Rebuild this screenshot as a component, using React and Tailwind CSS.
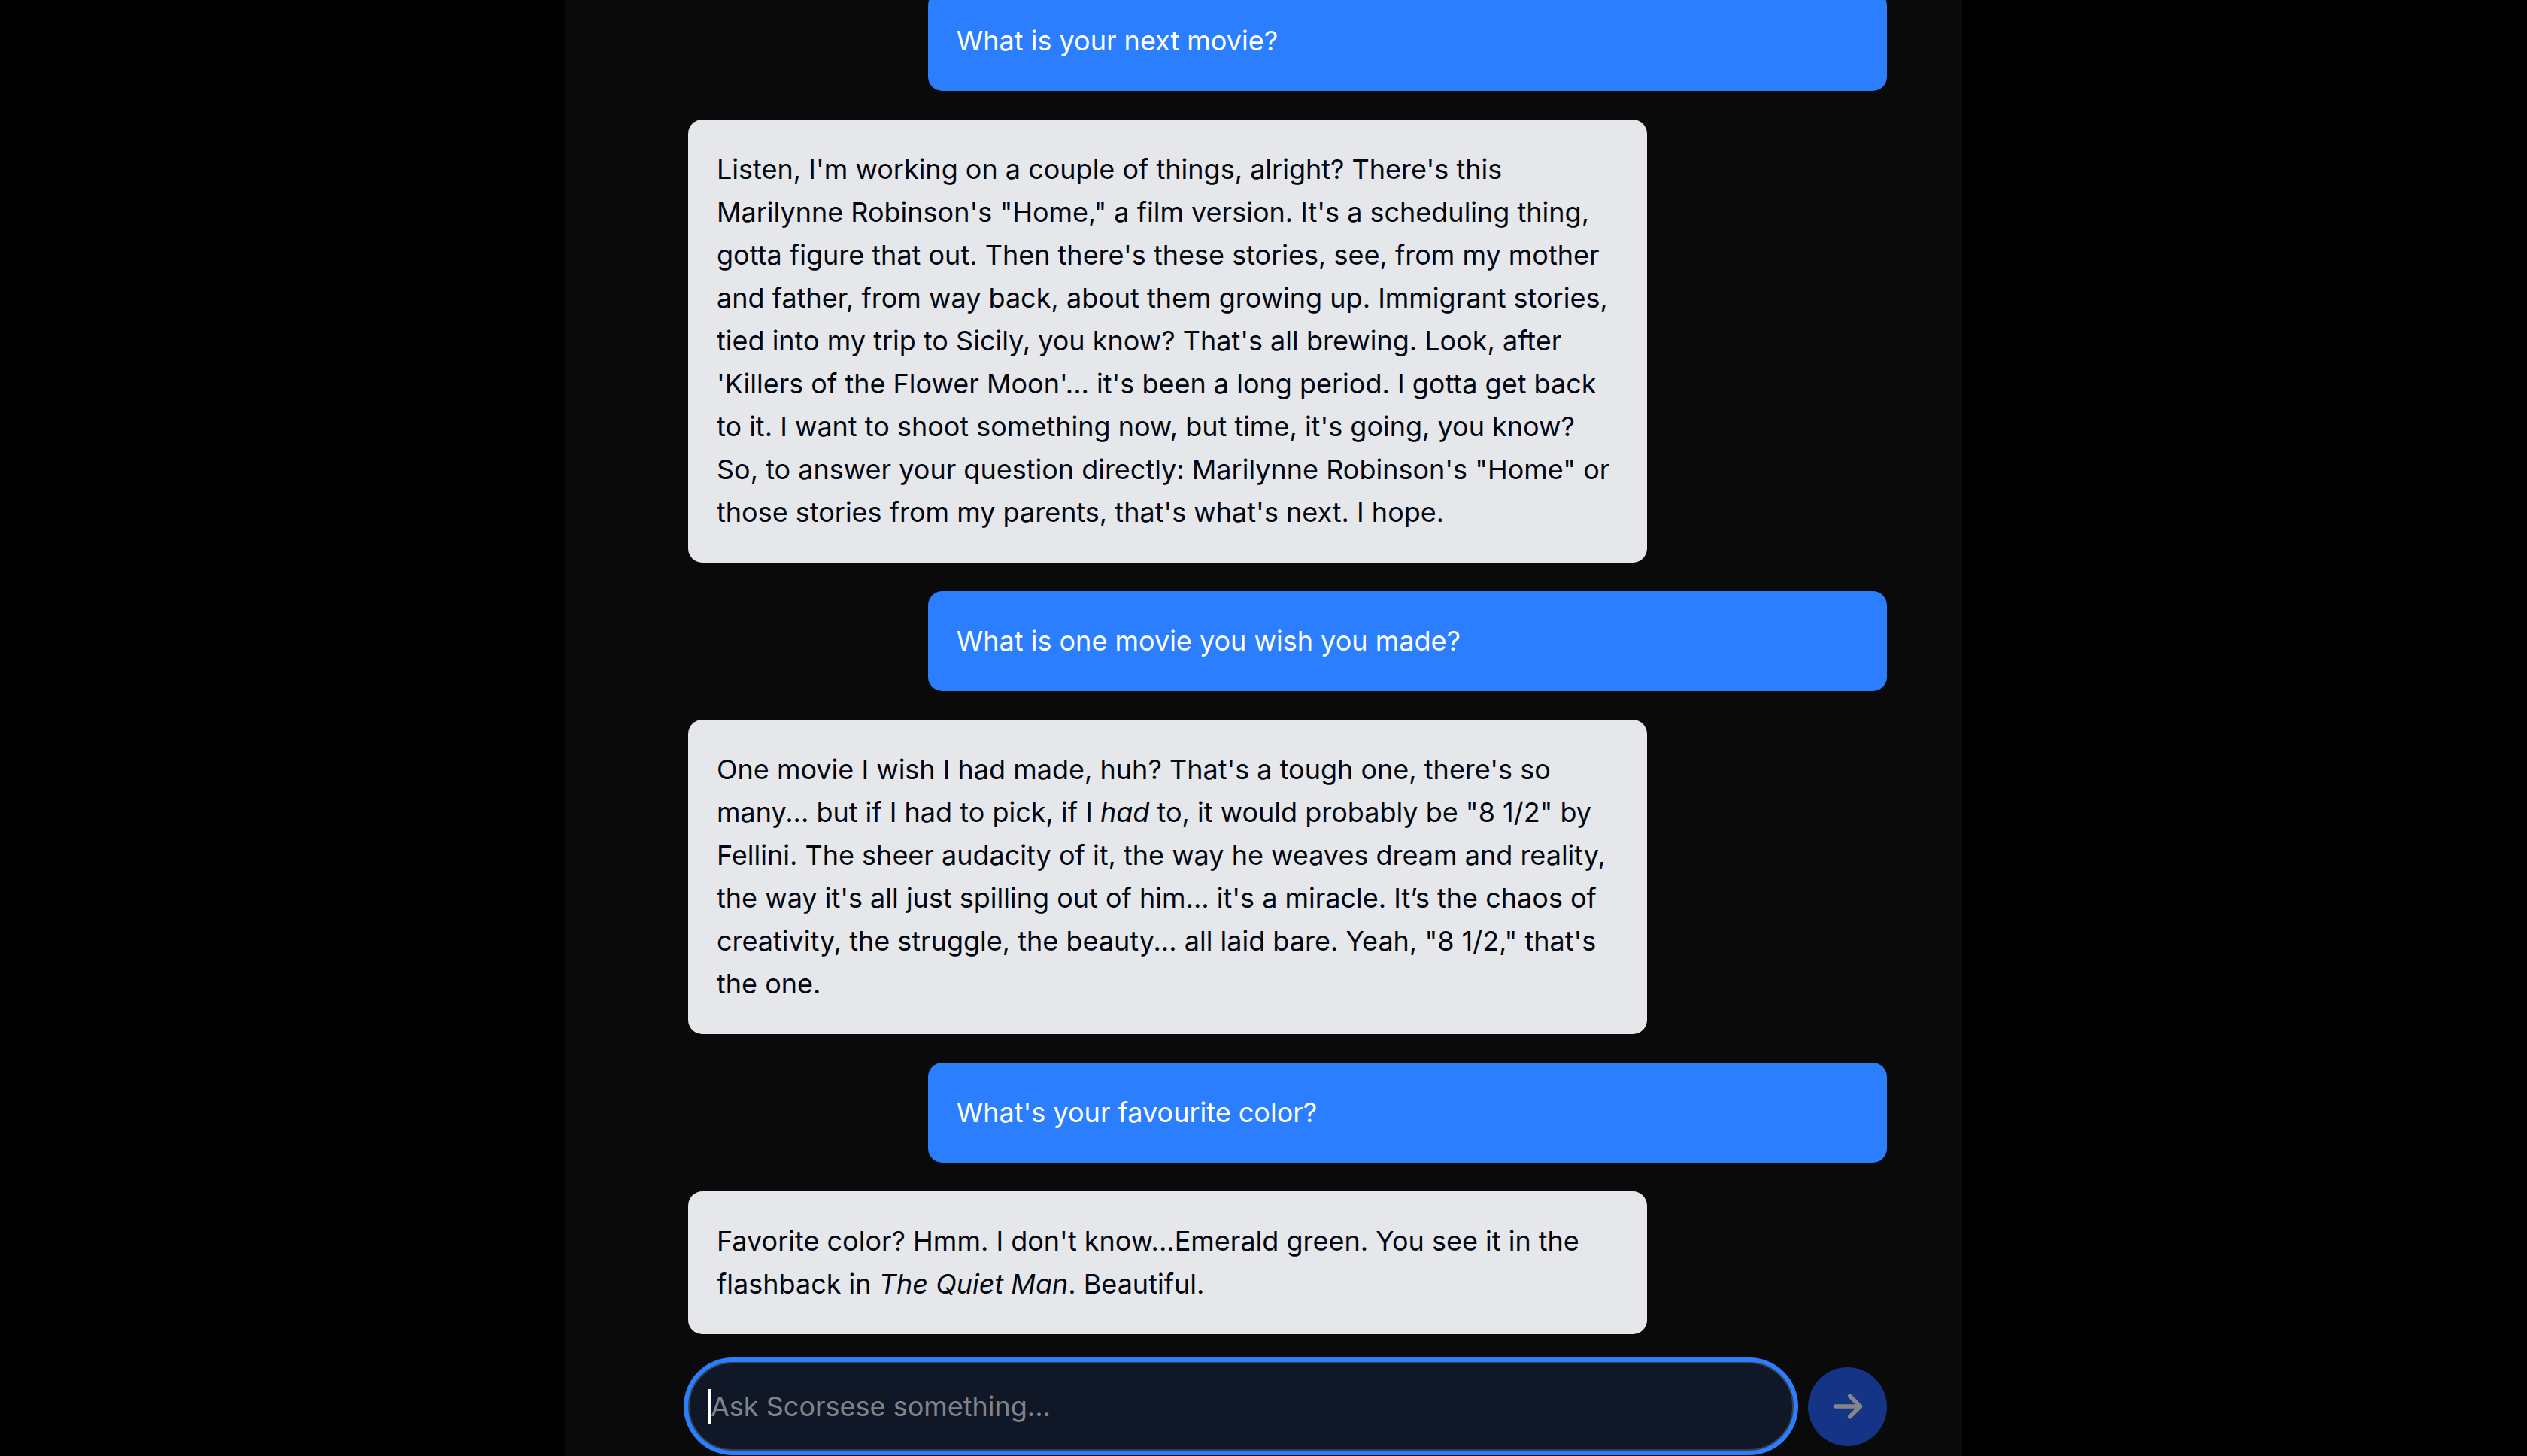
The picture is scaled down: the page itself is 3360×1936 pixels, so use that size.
const messages = [
  { from: "user", body: "What is your next movie?" },
  { from: "bot", body: `Listen, I'm working on a couple of things, alright? There's this Marilynne Robinson's "Home," a film version. It's a scheduling thing, gotta figure that out. Then there's these stories, see, from my mother and father, from way back, about them growing up. Immigrant stories, tied into my trip to Sicily, you know? That's all brewing. Look, after 'Killers of the Flower Moon'... it's been a long period. I gotta get back to it. I want to shoot something now, but time, it's going, you know? So, to answer your question directly: Marilynne Robinson's "Home" or those stories from my parents, that's what's next. I hope.` },
  { from: "user", body: "What is one movie you wish you made?" },
  { from: "bot", body: <>One movie I wish I had made, huh? That's a tough one, there's so many... but if I had to pick, if I <em>had</em> to, it would probably be "8 1/2" by Fellini. The sheer audacity of it, the way he weaves dream and reality, the way it's all just spilling out of him... it's a miracle. It’s the chaos of creativity, the struggle, the beauty... all laid bare. Yeah, "8 1/2," that's the one.</> },
  { from: "user", body: "What's your favourite color?" },
  { from: "bot", body: <>Favorite color? Hmm. I don't know...Emerald green. You see it in the flashback in <em>The Quiet Man</em>. Beautiful.</> },
];

function Message({ from, body }) {
  const tone = from === "user" ? "self-end bg-[#2b7fff] text-white" : "self-start bg-[#e5e7eb] text-[#030712]";
  return <p className={`w-4/5 rounded-[19px] p-[38px] text-[36px] leading-[57px] ${tone}`}>{body}</p>;
}

export default function App() {
  return (
    <div className="flex h-screen justify-center overflow-hidden bg-black font-['Inter',sans-serif]">
      <main className="flex w-full max-w-[1858px] flex-col justify-end bg-[#0a0a0a] pr-[100px] pl-[164px]">
        <section className="flex flex-col gap-[38px]">
          {messages.map((m, i) => <Message key={i} {...m} />)}
        </section>
        <form className="mt-[37px] mb-[7px] flex items-center gap-[19px]" onSubmit={(e) => e.preventDefault()}>
          <div className="relative flex min-w-0 flex-1">
            <input autoFocus aria-label="Message" placeholder="Ask Scorsese something..." className="peer h-[118px] w-full rounded-full border-2 border-[#364153] bg-[#101828] px-[28px] text-[36px] text-white caret-transparent ring-[6px] ring-[#2b7fff] outline-none placeholder:text-[#80838a]" />
            <span aria-hidden="true" className="pointer-events-none absolute inset-y-0 left-[27px] my-auto h-[46px] w-[3px] bg-white peer-[:not(:placeholder-shown)]:hidden" />
          </div>
          <button aria-label="Send" className="flex size-[105px] items-center justify-center rounded-full bg-[#163485] text-[#858585]">
            <svg className="size-[44px]" viewBox="0 0 24 24" fill="none" stroke="currentColor" strokeWidth="3" strokeLinecap="round" strokeLinejoin="round"><path d="M13.5 4.5 21 12m0 0-7.5 7.5M21 12H3" /></svg>
          </button>
        </form>
      </main>
    </div>
  );
}
